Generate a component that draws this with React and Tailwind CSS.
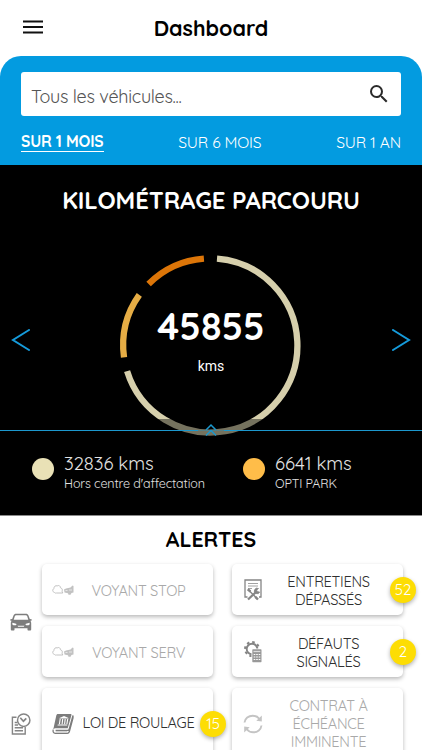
import React from 'react';

const PERIODS = [
  { id: 'month', label: 'SUR 1 MOIS', style: 'font-bold border-b-[1.5px] border-white leading-[19px] tracking-[-0.15px]' },
  { id: 'half', label: 'SUR 6 MOIS', style: 'tracking-[-0.15px]' },
  { id: 'year', label: 'SUR 1 AN', style: 'tracking-[-0.15px]' }
];

const SEGMENTS = [
  { from: 4.4, to: 252.8, color: '#d6cfac' },
  { from: 262.1, to: 305.4, color: '#e6ad45' },
  { from: 314.9, to: 355.8, color: '#dc7508' }
];

const arcPath = (from, to, r = 87.1) => {
  const point = (deg) => {
    const a = ((deg - 90) * Math.PI) / 180;
    return `${90.3 + r * Math.cos(a)} ${91.4 + r * Math.sin(a)}`;
  };
  return `M${point(from)}A${r} ${r} 0 ${to - from > 180 ? 1 : 0} 1 ${point(to)}`;
};

function SmokeIcon() {
  return (
    <svg width="22" height="12" viewBox="0 0 22 12" fill="none" className="text-[#c2c2c2]">
      <path d="M2.5 8.5C.3 7.8.2 5.4 2 4.6C1.700 2.600 3.500 1.200 5.200 1.900C6.800.9 8.500 2 8.400 3.700C10.200 4.200 10.800 6 10 7.200L10.800 9H4.500C3.700 9.300 3 9.100 2.500 8.500Z" stroke="currentColor" strokeWidth="1" />
      <path d="M12 5.500L14 4.500L18.500 3.500L20.500 1.500L21.500 2V8.500L19.500 9L18.500 10.800H16.500L16 9.300L12.500 8.500Z" fill="currentColor" />
      <path d="M13.500 6.500H15.500M17 6H20" stroke="#fff" strokeWidth=".6" />
    </svg>
  );
}

function ServiceIcon() {
  return (
    <svg width="18" height="22" viewBox="0 0 18 22" fill="none" stroke="#858585">
      <path d="M3.500 18H1V1H17V18H15" strokeWidth="1.300" />
      <path d="M4 4.500H14M4 7H14M4 9.500H8" strokeWidth="1" stroke="#a2a2a2" />
      <path d="M4.500 11L13.500 20" strokeWidth="1.500" />
      <path d="M3.700 10.300L6.500 12.500M11.300 17.800L14 20.500" strokeWidth="2.400" />
      <path d="M4 20.500L12 13" strokeWidth="2.300" />
      <path d="M14.500 9.500A2.800 2.800 0 1 0 15.700 13L13 12.500L12.800 11Z" fill="#858585" strokeWidth=".7" />
    </svg>
  );
}

function DefectIcon() {
  return (
    <svg width="18" height="22" viewBox="0 0 18 22" fill="none">
      <circle cx="8" cy="8" r="7" stroke="#858585" strokeWidth="2" strokeDasharray="2.600 2.898" />
      <circle cx="8" cy="8" r="5.300" stroke="#858585" strokeWidth="1.900" />
      <rect x="7.500" y="7.500" width="10.500" height="14" fill="#fff" />
      <rect x="8.300" y="8.300" width="9.200" height="12.900" rx=".6" fill="#999" />
      <path d="M9.500 10.500H16.300" stroke="#ddd" strokeWidth="1.200" />
      <path d="M9.700 13.500H16.300M9.700 16H16.300M9.700 18.500H16.300" stroke="#fff" strokeWidth="1" strokeDasharray="1.600 .9" />
    </svg>
  );
}

function BookIcon() {
  return (
    <svg width="22" height="22" viewBox="0 0 22 22" fill="none">
      <path d="M6 1H18.500C19.300 1 19.600 1.500 19.400 2.200L15.700 15.300H3.500C2.500 15.300 1.700 15.900 1.200 16.700L4.300 2.600C4.500 1.600 5 1 6 1Z" fill="#7c7c7c" />
      <path d="M1.200 16.700C.7 18.700 1.500 20.300 3.200 20.300H15.300C16.300 20.300 17 19.700 17.300 18.800L21 5V2.500L17.200 16.200C17 17 16.500 17.300 15.700 17.300H3.600" stroke="#7c7c7c" strokeWidth="1.300" />
      <path d="M3.700 18.800H15.200" stroke="#999" strokeWidth=".6" />
      <path d="M7.500 5L12 3L16.500 5V5.600H7.300ZM5.800 11.400H15.200V12.600H5.500Z" fill="#fff" />
      <path d="M8.200 6L7.400 11.200M10.700 6L10.100 11.200M13.200 6L12.600 11.200M15.700 6L14.900 11.200" stroke="#fff" strokeWidth="1.100" />
    </svg>
  );
}

function RenewIcon() {
  return (
    <svg width="20" height="20" viewBox="0 0 20 20" fill="none" stroke="#c4c4c4" strokeWidth="1.900">
      <path d="M1.500 8.500C2 4.500 5.500 1.700 9.700 1.700C12.700 1.700 15 3 16.500 5" />
      <path d="M18.500 11.500C18 15.500 14.500 18.300 10.300 18.300C7.300 18.300 5 17 3.500 15" />
      <path d="M18.800 1.500V7.500L13.300 6.800ZM1.200 18.500V12.500L6.700 13.200Z" fill="#c4c4c4" stroke="none" />
    </svg>
  );
}

function CarIcon() {
  return (
    <svg width="22" height="18" viewBox="0 0 22 18">
      <path d="M6.200 0.700H15.800C17.200.7 18 1.300 18.500 2.500L19.800 6L21.500 6.200C22 6.600 21.800 7.600 21.200 7.700H20.400C21 8.600 21.200 9.300 21.200 10.500V16.500C21.200 17.200 20.900 17.500 20.300 17.500H18.500C17.800 17.500 17.500 17.200 17.500 16.500V15.200H4.500V16.500C4.500 17.200 4.200 17.500 3.500 17.500H1.700C1.100 17.500.8 17.200.8 16.500V10.500C.8 9.300 1 8.600 1.600 7.700H.8C.2 7.600 0 6.600.5 6.200L2.200 6L3.500 2.500C4 1.300 4.800.7 6.200.7Z" fill="#7d7d7d" />
      <path d="M6.200 2.200H15.800C16.500 2.200 16.900 2.500 17.100 3.100L18.300 6.800H3.700L4.900 3.100C5.100 2.500 5.500 2.200 6.200 2.200Z" fill="#fff" />
      <path d="M2.500 9.700L6 10.700C6.800 11 6.500 12.200 5.600 12.200H3.700C2.500 12.200 2 10.700 2.500 9.700ZM19.500 9.700L16 10.700C15.200 11 15.500 12.200 16.400 12.200H18.300C19.500 12.200 20 10.700 19.500 9.700ZM7.500 12.700H14.500L13.800 13.700H8.200Z" fill="#fff" />
    </svg>
  );
}

function DeadlineIcon() {
  return (
    <svg width="20" height="22" viewBox="0 0 20 22" fill="none" stroke="#858585" strokeWidth="1.400">
      <path d="M5.500 4.300H1.400V21H14.200V14" />
      <path d="M3.700 9.500H6M3.700 12H7M3.700 14.800H12M3.700 17.800H12" />
      <circle cx="12.700" cy="7.200" r="6.200" strokeWidth="1.500" />
      <path d="M9.300 4.800L12.400 8.200L15.300 5.300" strokeWidth="1.700" />
    </svg>
  );
}

function Card({ icon, children, count, muted, className = '', textClass = '' }) {
  return (
    <div className={`relative flex items-center rounded-[5px] bg-white pl-2.5 shadow-[0_2px_4px_rgba(0,0,0,0.28)] ${className}`}>
      <div className="flex w-[22px] shrink-0 justify-center">{icon}</div>
      <div className={`flex-1 text-center text-[14.6px] leading-[18px] tracking-[-0.3px] ${muted ? 'text-[#a9a9a9]' : 'text-[#303030]'} ${textClass}`}>
        {children}
      </div>
      {count && (
        <span className="absolute top-1/2 -right-[13px] flex size-[26px] -translate-y-1/2 items-center justify-center rounded-full bg-[#fddd04] pt-0.5 text-[15px] text-white shadow-[0_2px_4px_rgba(0,0,0,0.3)]">
          {count}
        </span>
      )}
    </div>
  );
}

function Legend({ color, value, label }) {
  return (
    <div className="flex items-start">
      <span className={`mt-1.5 mr-[10.5px] size-[21.5px] shrink-0 rounded-full ${color}`} />
      <div className="whitespace-nowrap text-[#e3e3e3]">
        <div className="text-[18.5px] leading-[22px] tracking-[-0.05px]">{value}</div>
        <div className="text-[12.5px] leading-[18px] tracking-[-0.12px]">{label}</div>
      </div>
    </div>
  );
}

export default function App() {
  return (
    <div className="flex h-[750px] w-[422px] flex-col overflow-hidden bg-white font-['Quicksand','Lato',sans-serif]">
      <header className="grid h-14 shrink-0 grid-cols-[1fr_auto_1fr] items-center">
        <svg width="20" height="14" viewBox="0 0 20 14" className="-mt-0.5 ml-[23px]" stroke="#111" strokeWidth="2">
          <path d="M0 1.500H20M0 7H20M0 12.500H20" />
        </svg>
        <h1 className="text-[21.5px] font-bold text-black">Dashboard</h1>
      </header>

      {/* Search and period filter */}
      <section className="h-[109px] shrink-0 rounded-t-[21px] bg-[#039be0] px-[21px] pt-4">
        <div className="flex h-11 items-center justify-between rounded-[3px] bg-white pt-1 pr-2.5 pl-2.5">
          <span className="text-[18px] tracking-[-0.27px] text-[#555]">Tous les véhicules...</span>
          <svg width="24" height="24" viewBox="0 0 24 24" className="-mt-1" fill="#2b2b2b">
            <path d="M15.500 14h-.79l-.28-.27A6.471 6.471 0 0 0 16 9.500 6.500 6.500 0 1 0 9.500 16c1.610 0 3.090-.59 4.230-1.570l.27.28v.79l5 4.990L20.490 19l-4.990-5zm-6 0C7.010 14 5 11.990 5 9.500S7.010 5 9.500 5 14 7.010 14 9.500 11.990 14 9.500 14z" />
          </svg>
        </div>
        <nav className="mt-4 flex items-start justify-between text-[15.6px] leading-5 text-white">
          {PERIODS.map(p => (
            <span key={p.id} className={p.style}>{p.label}</span>
          ))}
        </nav>
      </section>

      {/* Mileage */}
      <section className="flex h-[351px] shrink-0 flex-col border-b border-[#8a8a8a] bg-black text-white">
        <h2 className="mt-[18.5px] text-center text-2xl leading-8 font-bold tracking-[-0.1px]">KILOMÉTRAGE PARCOURU</h2>
        <div className="mt-[38.5px] flex h-[182px] shrink-0 items-center justify-between pr-[11px] pl-[11px]">
          <svg width="20" height="22" viewBox="0 0 20 22" className="-mt-2.5" fill="none" stroke="#159bdb" strokeWidth="2" strokeLinecap="round">
            <path d="M18 1L2 11L18 21" />
          </svg>
          <div className="relative size-[182px]">
            <svg width="182" height="182" viewBox="0 0 182 182" fill="none" className="overflow-visible">
              {SEGMENTS.map(s => (
                <path key={s.color} d={arcPath(s.from, s.to)} stroke={s.color} strokeWidth="6.300" />
              ))}
            </svg>
            <div className="absolute inset-0 flex flex-col items-center">
              <span className="mt-[49px] text-[37.5px] leading-[46px] font-bold">45855</span>
              <span className="mt-[7px] font-['Roboto',sans-serif] text-sm leading-5 font-normal">kms</span>
            </div>
          </div>
          <svg width="20" height="22" viewBox="0 0 20 22" className="-mt-2.5" fill="none" stroke="#159bdb" strokeWidth="2" strokeLinecap="round">
            <path d="M2 1L18 11L2 21" />
          </svg>
        </div>
        {/* Drawer handle, slides over the bottom of the ring */}
        <div className="relative -mt-[17px] h-[19px] shrink-0 bg-black/45">
          <svg width="422" height="19" viewBox="0 0 422 19" fill="none" stroke="#1c98cd" className="absolute inset-0">
            <path d="M0 11.500H198M224 11.500H422" strokeWidth="1" />
            <path d="M198 11.500H224" strokeWidth="1" strokeOpacity=".35" />
            <path d="M206 11L211 6L216 11M206 16.500L211 11.500L216 16.500" strokeWidth="1.500" />
          </svg>
        </div>
        <div className="grid grid-cols-[211px_1fr] pt-[14px] pl-8">
          <Legend color="bg-[#e9e1b6]" value="32836 kms" label="Hors centre d'affectation" />
          <Legend color="bg-[#ffbd49]" value="6641 kms" label="OPTI PARK" />
        </div>
      </section>

      {/* Alerts */}
      <section className="shrink-0">
        <h2 className="mt-[7px] text-center text-[21.3px] leading-8 font-bold text-black">ALERTES</h2>
        <div className="mt-[9px] grid grid-cols-[42px_171px_171px] grid-rows-[51px_51px_71px] gap-y-[11px]">
          <div className="row-span-2 flex items-center pt-0.5 pl-2.5"><CarIcon /></div>
          <Card muted icon={<SmokeIcon />} textClass="pr-2.5 pt-0.5">VOYANT STOP</Card>
          <Card count={52} icon={<ServiceIcon />} className="ml-[19px] -mr-[19px]" textClass="pr-2.5 pt-0.5">ENTRETIENS<br />DÉPASSÉS</Card>
          <Card muted icon={<SmokeIcon />} textClass="pr-2.5 pt-0.5">VOYANT SERV</Card>
          <Card count={2} icon={<DefectIcon />} className="ml-[19px] -mr-[19px]" textClass="pr-2.5 pt-0.5">DÉFAUTS<br />SIGNALÉS</Card>
          <div className="flex items-center pl-[11px]"><DeadlineIcon /></div>
          <Card count={15} icon={<BookIcon />} textClass="pr-2.5 pb-0.5 whitespace-nowrap">LOI DE ROULAGE</Card>
          <Card muted icon={<RenewIcon />} className="ml-[19px] -mr-[19px]" textClass="pr-2.5">CONTRAT À<br />ÉCHÉANCE<br />IMMINENTE</Card>
        </div>
      </section>
    </div>
  );
}
